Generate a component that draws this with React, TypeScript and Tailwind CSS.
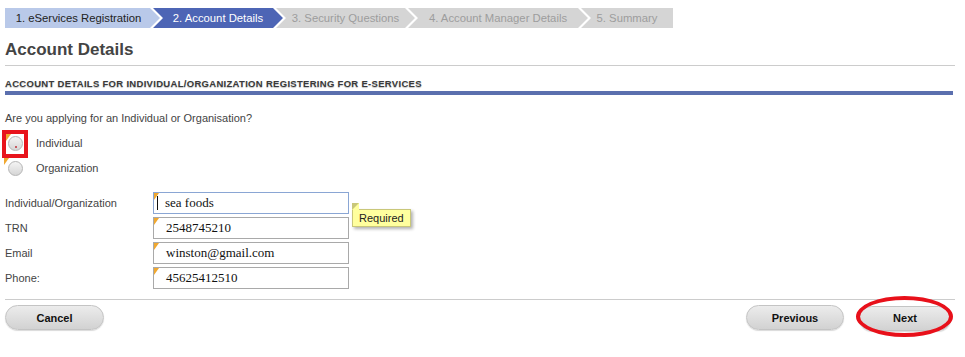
import React from 'react';

const steps = [
  { label: '1. eServices Registration', w: 'w-[155px]', state: 'done' },
  { label: '2. Account Details', w: 'w-[130px]', state: 'active' },
  { label: '3. Security Questions', w: 'w-[139px]', state: 'todo' },
  { label: '4. Account Manager Details', w: 'w-[180px]', state: 'todo' },
  { label: '5. Summary', w: 'w-[92px]', state: 'last' },
];

const fields = [
  { label: 'Individual/Organization', value: 'sea foods', focused: true },
  { label: 'TRN', value: '2548745210' },
  { label: 'Email', value: 'winston@gmail.com' },
  { label: 'Phone:', value: '45625412510' },
];

// small orange marker in the top-left corner of required fields
const Corner = ({ className = 'left-0 top-0' }: { className?: string }) => (
  <span className={`absolute h-0 w-0 border-t-[7px] border-r-[5px] border-t-[#f0a830] border-r-transparent ${className}`} />
);

const Radio = () => (
  <span className="block h-[15px] w-[15px] rounded-full border border-[#b5b5b5] bg-gradient-to-b from-[#f4f4f4] to-[#d6d6d6]" />
);

const PillButton = ({ label, className }: { label: string; className: string }) => (
  <button className={`h-[25px] rounded-full border border-[#c4c4c4] bg-gradient-to-b from-[#ececec] to-[#d2d2d2] text-[11px] font-bold text-[#111] shadow-[0_1px_1px_rgba(0,0,0,0.15)] ${className}`}>
    {label}
  </button>
);

export default function App() {
  return (
    <div className="h-[357px] w-[965px] overflow-hidden bg-white px-[5px] pt-[8px] font-['Liberation_Sans',Arial,sans-serif] text-[#444]">
      {/* wizard steps */}
      <div className="flex h-[20px]">
        {steps.map((s, i) => {
          const bg =
            s.state === 'done' ? 'bg-[#b9c9e9] text-[#222]' : s.state === 'active' ? 'bg-[#4d65b5] text-white' : 'bg-[#d5d5d5] text-[#9d9d9d]';
          const clip =
            i === 0
              ? '[clip-path:polygon(0_0,calc(100%-10px)_0,100%_50%,calc(100%-10px)_100%,0_100%)]'
              : s.state === 'last'
              ? '[clip-path:polygon(0_0,100%_0,100%_100%,0_100%,10px_50%)]'
              : '[clip-path:polygon(0_0,calc(100%-10px)_0,100%_50%,calc(100%-10px)_100%,0_100%,10px_50%)]';
          return (
            <div
              key={s.label}
              className={`flex h-[20px] shrink-0 items-center justify-center text-[11.3px] ${s.w} ${bg} ${clip} ${i === 0 ? 'pr-[8px]' : '-ml-[7px]'}`}
            >
              {s.label}
            </div>
          );
        })}
      </div>

      <h1 className="mt-[11px] text-[17px] font-bold leading-[22px] text-[#444]">Account Details</h1>
      <div className="mt-[4px] h-px w-[950px] bg-[#cccccc]" />

      <div className="mt-[12px] text-[9.5px] font-bold uppercase leading-[11px] tracking-[0.3px] text-[#3a3a3a] [text-shadow:0_1px_1px_rgba(0,0,0,0.25)]">
        Account details for individual/organization registering for e-services
      </div>
      <div className="mt-[2px] h-[4px] w-[948px] bg-[#5b6fae]" />

      <div className="mt-[17px] text-[11px] leading-[13px]">Are you applying for an Individual or Organisation?</div>

      <div className="mt-[6px] flex flex-col">
        <div className="flex h-[25px] items-center">
          <div className="relative -ml-[3px] flex h-[28px] w-[26px] items-center justify-center border-[4px] border-[#e8141c]">
            <Corner className="left-[0px] top-[0px]" />
            <Radio />
            <span className="absolute left-[9px] top-[12px] h-[2px] w-[2px] rounded-full bg-[#c0303a]" />
          </div>
          <span className="ml-[8px] text-[11px]">Individual</span>
        </div>
        <div className="flex h-[25px] items-center">
          <div className="relative flex h-[20px] w-[20px] items-center justify-center">
            <Corner className="-left-[1px] -top-[1px]" />
            <Radio />
          </div>
          <span className="ml-[11px] text-[11px]">Organization</span>
        </div>
      </div>

      <div className="mt-[11px] flex flex-col gap-[3px]">
        {fields.map((f) => (
          <div key={f.label} className="flex h-[22px] items-center">
            <span className="w-[148px] pt-[1px] text-[11px]">{f.label}</span>
            <div
              className={`relative flex h-[22px] w-[196px] items-center border bg-white font-['Liberation_Serif','Times_New_Roman',serif] text-[13px] text-[#111] ${
                f.focused ? 'border-[#8aa6d4]' : 'border-[#a9a9a9]'
              }`}
            >
              <Corner />
              {f.focused ? (
                <>
                  <span className="ml-[3px] h-[14px] w-px bg-[#111]" />
                  <span className="ml-[7px]">{f.value}</span>
                </>
              ) : (
                <span className="ml-[12px]">{f.value}</span>
              )}
              {f.focused && (
                <div className="absolute left-[198px] top-[16px] flex h-[18px] items-center border border-[#c9c77a] bg-[#ffff9e] px-[6px] font-['Liberation_Sans',Arial,sans-serif] text-[11px] text-[#222] shadow-[2px_2px_3px_rgba(0,0,0,0.3)]">
                  <span className="absolute -left-[1px] -top-[7px] h-0 w-0 border-b-[7px] border-l-[7px] border-b-[#ffff9e] border-l-[#c9c77a]" />
                  Required
                </div>
              )}
            </div>
          </div>
        ))}
      </div>

      <div className="mt-[10px] h-px w-[950px] bg-[#cccccc]" />

      <div className="mt-[5px] flex w-[946px] items-center">
        <PillButton label="Cancel" className="w-[99px]" />
        <div className="flex-1" />
        <PillButton label="Previous" className="w-[98px]" />
        <div className="relative ml-[15px]">
          <PillButton label="Next" className="w-[92px]" />
          <span className="pointer-events-none absolute -left-[3px] -top-[9px] h-[41px] w-[97px] rounded-[50%] border-[4px] border-[#e8101a]" />
        </div>
      </div>
    </div>
  );
}
